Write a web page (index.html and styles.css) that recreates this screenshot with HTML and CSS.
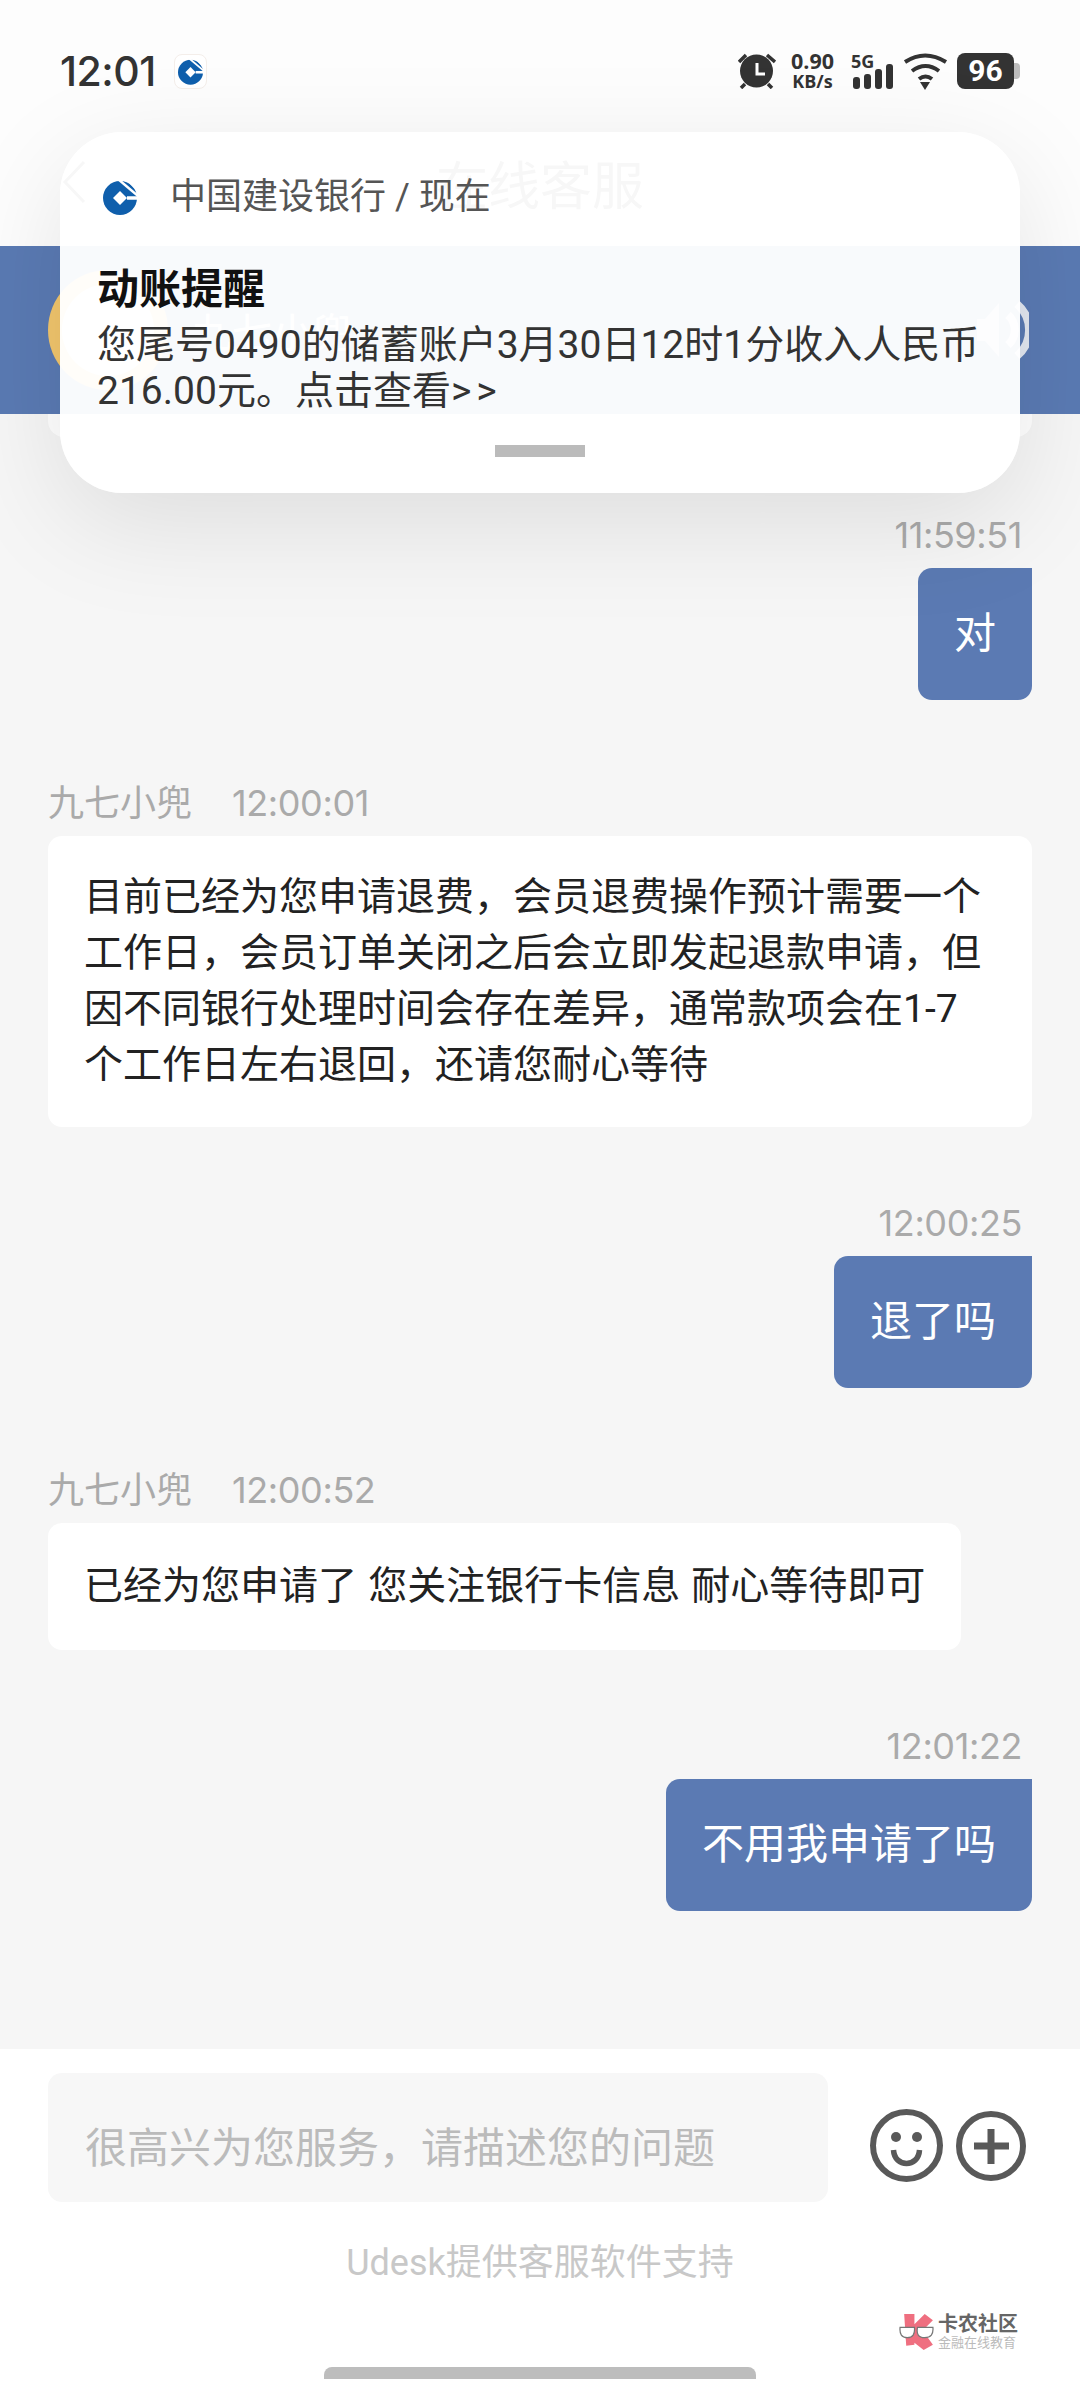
FILE: index.html
```html
<!DOCTYPE html>
<html lang="zh-CN">
<head>
<meta charset="utf-8">
<title>在线客服</title>
<link rel="stylesheet" href="styles.css">
</head>
<body>
<div class="phone">
  <header class="top">
    <div class="status">
      <span class="clock">12:01</span>
      <span class="tile">
        <svg class="ccb-small" viewBox="0 0 34 36"><use href="#ccb"/></svg>
      </span>
      <div class="status-right">
        <svg class="alarm" viewBox="0 0 38 36"><circle cx="18.500" cy="18" r="16.500" fill="#333"/><path d="M19 10v11h8" fill="none" stroke="#fff" stroke-width="3"/><path d="M1 9l7-7M37 9l-8-7M3 35l4-4M34 35l-4-4" stroke="#333" stroke-width="3.500" fill="none"/></svg>
        <div class="speed"><span>0.90</span><span>KB/s</span></div>
        <div class="signal">
          <span class="five-g">5G</span>
          <svg class="bars" viewBox="0 0 40 25"><rect x="0" y="13" width="7" height="12" rx="3" fill="#333"/><rect x="11" y="10" width="7" height="15" rx="3" fill="#333"/><rect x="22" y="5" width="7" height="20" rx="3" fill="#333"/><rect x="33" y="0" width="7" height="25" rx="3" fill="#333"/></svg>
        </div>
        <svg class="wifi" viewBox="0 0 45 37"><path d="M2 9Q22-4 43 9M9 18Q22.5 8 36 18M16 26Q22.5 21 29 26" fill="none" stroke="#333" stroke-width="4"/><path d="M17 29h10l-5 8z" fill="#333"/></svg>
        <div class="battery"><span class="battery-body">96</span><span class="battery-nub"></span></div>
      </div>
    </div>
    <div class="nav">
      <svg class="back" viewBox="0 0 24 44"><path d="M22 2L3 22l19 20" fill="none" stroke="#333" stroke-width="3"/></svg>
      <span class="nav-title">在线客服</span>
    </div>
  </header>

  <section class="agent">
    <div class="avatar"><div class="avatar-face"></div></div>
    <span class="agent-name">九七小兜</span>
    <svg class="speaker" viewBox="0 0 52 70"><path d="M0 24h8L22 8v54L8 46H0z" fill="#fff" fill-opacity="0.6"/><path d="M31 20A20 20 0 0 1 31 50M40 9A34 34 0 0 1 40 61" fill="none" stroke="#e2e7f1" stroke-width="8"/></svg>
  </section>

  <main class="chat">
    <div class="notice-card"></div>

    <div class="msg msg-out first">
      <div class="meta"><span class="stamp">11:59:51</span></div>
      <div class="bubble bubble-out">对</div>
    </div>

    <div class="msg msg-in long">
      <div class="meta"><span class="who">九七小兜</span><span class="stamp">12:00:01</span></div>
      <div class="bubble bubble-in">目前已经为您申请退费，会员退费操作预计需要一个工作日，会员订单关闭之后会立即发起退款申请，但因不同银行处理时间会存在差异，通常款项会在1-7个工作日左右退回，还请您耐心等待</div>
    </div>

    <div class="msg msg-out">
      <div class="meta"><span class="stamp">12:00:25</span></div>
      <div class="bubble bubble-out">退了吗</div>
    </div>

    <div class="msg msg-in">
      <div class="meta"><span class="who">九七小兜</span><span class="stamp">12:00:52</span></div>
      <div class="bubble bubble-in single">已经为您申请了 您关注银行卡信息 耐心等待即可</div>
    </div>

    <div class="msg msg-out">
      <div class="meta"><span class="stamp">12:01:22</span></div>
      <div class="bubble bubble-out">不用我申请了吗</div>
    </div>
  </main>

  <footer class="composer">
    <div class="composer-row">
      <div class="input">很高兴为您服务，请描述您的问题</div>
      <svg class="smile" viewBox="0 0 73 73"><circle cx="36.500" cy="36.500" r="33.500" fill="none" stroke="#595959" stroke-width="6"/><circle cx="26" cy="28" r="5" fill="#595959"/><circle cx="47" cy="28" r="5" fill="#595959"/><path d="M23.500 41c1 18 25 18 26 0" fill="none" stroke="#595959" stroke-width="5.500"/></svg>
      <svg class="plus" viewBox="0 0 70 70"><circle cx="35" cy="35" r="32" fill="none" stroke="#595959" stroke-width="6"/><path d="M18 35h35M35 18v35" stroke="#595959" stroke-width="7" fill="none"/></svg>
    </div>
    <div class="powered">Udesk提供客服软件支持</div>
    <div class="home-bar"></div>
  </footer>

  <div class="notification">
    <div class="app-row">
      <svg class="ccb" viewBox="0 0 34 36">
        <g id="ccb">
          <circle cx="17" cy="19" r="17" fill="#0f5fac"/>
          <path d="M17 12l7 7-7 7-7-7z" fill="#fff"/>
          <path d="M24 19h11" stroke="#fff" stroke-width="3.500"/>
          <path d="M15 0l20 17" stroke="#fff" stroke-width="2.500"/>
          <path d="M22 0h13v13z" fill="#fff"/>
        </g>
      </svg>
      <span class="app-name">中国建设银行 / 现在</span>
    </div>
    <div class="note-title">动账提醒</div>
    <div class="note-body">您尾号0490的储蓄账户3月30日12时1分收入人民币216.00元。点击查看<span class="arrows">&gt;&gt;</span></div>
    <div class="handle"></div>
  </div>

  <div class="watermark">
    <svg class="wm-logo" viewBox="0 0 35 38">
      <path d="M5 2h10v10L25 2l8 6-10 10 10 14-9 5-9-7v2l-8 1z" fill="#ef6f80"/>
      <path d="M1 15h14q1 10-7 10T1 15zM18 15h15q1 10-8 10T18 15z" fill="#fff" stroke="#777" stroke-width="1.200"/>
    </svg>
    <div class="wm-text">
      <span class="wm-name">卡农社区</span>
      <span class="wm-sub">金融在线教育</span>
    </div>
  </div>
</div>
</body>
</html>
```

FILE: styles.css
```css
* { box-sizing: border-box; }
html, body { margin: 0; padding: 0; }
body {
  width: 1080px;
  height: 2400px;
  overflow: hidden;
  font-family: Roboto, "Noto Sans CJK SC", sans-serif;
  background: #f6f6f6;
}
.phone {
  position: relative;
  width: 1080px;
  height: 2400px;
  display: flex;
  flex-direction: column;
  overflow: hidden;
}

/* top */
.top {
  height: 246px;
  flex: none;
  padding-top: 1px;
  background: #fdfdfd;
}
.status {
  display: flex;
  align-items: center;
  height: 36px;
  margin-top: 52px;
  padding: 0 60px;
}
.clock {
  font-family: Inter, sans-serif;
  font-size: 41px;
  font-weight: 500;
  letter-spacing: -0.5px;
  color: #333;
  line-height: 36px;
}
.tile {
  width: 33px;
  height: 35px;
  margin-left: 18px;
  border-radius: 8px;
  background: #fff;
  border: 1px solid #f4eeea;
  display: flex;
  align-items: center;
  justify-content: center;
}
.ccb-small { width: 25px; height: 27px; }
.status-right {
  margin-left: auto;
  display: flex;
  align-items: center;
  height: 36px;
}
.alarm { width: 38px; height: 36px; }
.speed {
  display: flex;
  flex-direction: column;
  align-items: center;
  width: 45px;
  margin-left: 14px;
  font-family: "Open Sans", sans-serif;
  font-weight: 700;
  color: #333;
}
.speed span:first-child { font-size: 21.500px; line-height: 21px; }
.speed span:last-child { font-size: 18px; line-height: 21px; }
.signal {
  position: relative;
  width: 40px;
  height: 36px;
  margin-left: 18px;
}
.five-g {
  position: absolute;
  left: -2px;
  top: 0;
  font-family: "Open Sans", sans-serif;
  font-size: 18px;
  font-weight: 700;
  line-height: 16px;
  color: #333;
}
.bars { position: absolute; left: 0; bottom: 0; width: 40px; height: 25px; }
.wifi { width: 45px; height: 37px; margin-left: 10px; }
.battery {
  display: flex;
  align-items: center;
  margin-left: 9px;
}
.battery-body {
  width: 57px;
  height: 36px;
  background: #333;
  border-radius: 8px;
  color: #fff;
  font-size: 30px;
  font-weight: 700;
  line-height: 36px;
  text-align: center;
}
.battery-nub {
  width: 6px;
  height: 16px;
  background: #bdbdbd;
  border-radius: 0 4px 4px 0;
}
.nav {
  position: relative;
  height: 100px;
  margin-top: 43px;
  display: flex;
  align-items: center;
  justify-content: center;
}
.back {
  position: absolute;
  left: 62px;
  top: 28px;
  width: 24px;
  height: 44px;
}
.nav-title {
  font-size: 52px;
  color: #333;
}

/* agent band */
.agent {
  height: 168px;
  flex: none;
  background: #5a7ab3;
  display: flex;
  align-items: center;
  padding: 0 51px 0 48px;
}
.avatar {
  width: 120px;
  height: 120px;
  border-radius: 50%;
  background: #f2c66d;
  display: flex;
  align-items: center;
  justify-content: center;
}
.avatar-face {
  width: 92px;
  height: 92px;
  border-radius: 50%;
  background: #fff;
}
.agent-name {
  margin-left: 24px;
  color: #fff;
  font-size: 40px;
}
.speaker {
  margin-left: auto;
  width: 52px;
  height: 70px;
}

/* chat */
.chat {
  flex: 1;
  display: flex;
  flex-direction: column;
  padding: 0 48px;
  background: #f6f6f6;
}
.notice-card {
  height: 23px;
  background: #fff;
  border-radius: 0 0 16px 16px;
}
.msg { display: flex; flex-direction: column; }
.msg-out { align-items: flex-end; margin-top: 78px; }
.msg-in { align-items: flex-start; margin-top: 84px; }
.first { margin-top: 80px; }
.long { margin-top: 85px; }
.meta {
  height: 36px;
  margin-bottom: 15px;
  font-size: 36px;
  line-height: 36px;
  color: #aaa;
}
.msg-out .meta { padding-right: 10px; }
.who { margin-right: 40px; }
.stamp {
  font-family: Inter, sans-serif;
  font-size: 36px;
  letter-spacing: -0.4px;
}
.bubble { border-radius: 14px; }
.bubble-out {
  background: #5b7ab3;
  color: #fff;
  font-size: 42px;
  line-height: 56px;
  padding: 38px 36px;
  border-top-right-radius: 0;
}
.bubble-in {
  background: #fff;
  color: #222;
  font-size: 39px;
  line-height: 56px;
  padding: 33px 36px 34px;
}
.single { padding: 35px 36px 36px; word-spacing: 1.500px; }

/* composer */
.composer {
  position: relative;
  height: 351px;
  flex: none;
  background: #fff;
  padding: 24px 48px 0;
}
.composer-row {
  display: flex;
  align-items: center;
  height: 129px;
}
.input {
  width: 780px;
  height: 129px;
  background: #f7f7f7;
  border-radius: 14px;
  padding: 48px 0 0 37px;
  font-size: 42px;
  line-height: 56px;
  color: #bbb;
}
.smile { width: 73px; height: 73px; margin-left: 42px; margin-top: 16px; }
.plus { width: 70px; height: 70px; margin-left: 13px; margin-top: 16px; }
.powered {
  margin-top: 36px;
  text-align: center;
  font-size: 36px;
  line-height: 50px;
  color: #c8c8c8;
}
.home-bar {
  position: absolute;
  left: 324px;
  bottom: 21px;
  width: 432px;
  height: 12px;
  background: #bdbdbd;
  border-radius: 8px 8px 0 0;
}

/* notification overlay */
.notification {
  position: absolute;
  left: 60px;
  top: 132px;
  width: 960px;
  height: 361px;
  display: flex;
  flex-direction: column;
  border-radius: 62px;
  background: rgba(255, 255, 255, 0.96);
  box-shadow: 0 30px 110px rgba(0, 0, 0, 0.1);
  padding: 45px 37px 36px;
}
.app-row {
  display: flex;
  align-items: center;
  height: 40px;
}
.ccb { width: 34px; height: 36px; margin-left: 6px; }
.app-name {
  margin-left: 33px;
  font-size: 36px;
  line-height: 40px;
  color: #555;
}
.note-title {
  margin-top: 48px;
  font-size: 42px;
  font-weight: 700;
  line-height: 50px;
  color: #111;
}
.note-body {
  margin-top: 7px;
  font-size: 39px;
  line-height: 46px;
  color: #333;
}
.arrows { letter-spacing: 5px; }
.handle {
  align-self: center;
  width: 90px;
  height: 12px;
  margin-top: auto;
  background: #bbb;
}

/* watermark */
.watermark {
  position: absolute;
  left: 899px;
  top: 2312px;
  display: flex;
  gap: 3px;
}
.wm-logo { width: 36px; height: 39px; }
.wm-text { display: flex; flex-direction: column; }
.wm-name {
  font-size: 20px;
  font-weight: 700;
  line-height: 24px;
  color: #666;
}
.wm-sub {
  font-size: 13px;
  line-height: 14px;
  color: #bbb;
}
```
